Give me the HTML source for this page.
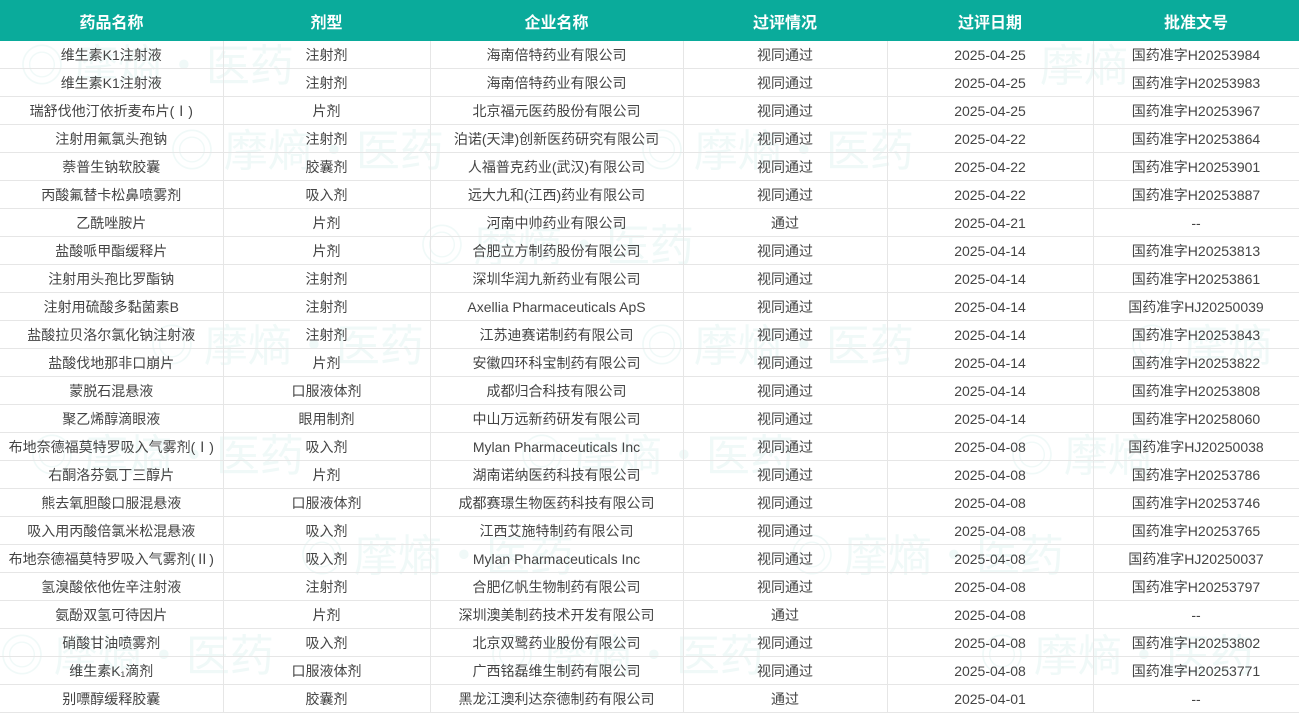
<!DOCTYPE html>
<html><head><meta charset="utf-8"><style>
body{margin:0;width:1299px;height:713px;overflow:hidden;background:#fff;font-family:"Liberation Sans","Noto Sans CJK SC",sans-serif;position:relative}
table{border-collapse:collapse;table-layout:fixed;width:1299px;position:relative;z-index:2}
th{background:#0aab9b;color:#fff;font-size:16px;font-weight:bold;height:41px;padding:0}
td{height:27px;border:1px solid #e6e6e6;border-top:none;color:#444;font-size:14px;text-align:center;padding:0;white-space:nowrap;overflow:hidden}
tr td:first-child{border-left:none}
.wm{position:absolute;z-index:1;color:#f0f9f8;font-size:44px;font-family:"Noto Sans CJK SC",sans-serif;white-space:nowrap}
</style></head><body>
<div class="wm" style="left:20px;top:30px">◎ 摩熵·医药</div>
<div class="wm" style="left:170px;top:115px">◎ 摩熵·医药</div>
<div class="wm" style="left:640px;top:115px">◎ 摩熵·医药</div>
<div class="wm" style="left:1040px;top:30px">摩熵</div>
<div class="wm" style="left:420px;top:210px">◎ 摩熵·医药</div>
<div class="wm" style="left:150px;top:310px">◎ 摩熵·医药</div>
<div class="wm" style="left:640px;top:310px">◎ 摩熵·医药</div>
<div class="wm" style="left:1130px;top:310px">◎ 摩熵</div>
<div class="wm" style="left:30px;top:420px">◎ 摩熵·医药</div>
<div class="wm" style="left:520px;top:420px">◎ 摩熵·医药</div>
<div class="wm" style="left:1010px;top:420px">◎ 摩熵</div>
<div class="wm" style="left:300px;top:520px">◎ 摩熵·医药</div>
<div class="wm" style="left:790px;top:520px">◎ 摩熵·医药</div>
<div class="wm" style="left:0px;top:620px">◎ 摩熵·医药</div>
<div class="wm" style="left:490px;top:620px">◎ 摩熵·医药</div>
<div class="wm" style="left:980px;top:620px">◎ 摩熵·医药</div>
<table>
<colgroup><col style="width:223px"><col style="width:207px"><col style="width:253px"><col style="width:204px"><col style="width:206px"><col style="width:206px"></colgroup>
<tr><th>药品名称</th><th>剂型</th><th>企业名称</th><th>过评情况</th><th>过评日期</th><th>批准文号</th></tr>
<tr><td>维生素K1注射液</td><td>注射剂</td><td>海南倍特药业有限公司</td><td>视同通过</td><td>2025-04-25</td><td>国药准字H20253984</td></tr>
<tr><td>维生素K1注射液</td><td>注射剂</td><td>海南倍特药业有限公司</td><td>视同通过</td><td>2025-04-25</td><td>国药准字H20253983</td></tr>
<tr><td>瑞舒伐他汀依折麦布片(Ⅰ)</td><td>片剂</td><td>北京福元医药股份有限公司</td><td>视同通过</td><td>2025-04-25</td><td>国药准字H20253967</td></tr>
<tr><td>注射用氟氯头孢钠</td><td>注射剂</td><td>泊诺(天津)创新医药研究有限公司</td><td>视同通过</td><td>2025-04-22</td><td>国药准字H20253864</td></tr>
<tr><td>萘普生钠软胶囊</td><td>胶囊剂</td><td>人福普克药业(武汉)有限公司</td><td>视同通过</td><td>2025-04-22</td><td>国药准字H20253901</td></tr>
<tr><td>丙酸氟替卡松鼻喷雾剂</td><td>吸入剂</td><td>远大九和(江西)药业有限公司</td><td>视同通过</td><td>2025-04-22</td><td>国药准字H20253887</td></tr>
<tr><td>乙酰唑胺片</td><td>片剂</td><td>河南中帅药业有限公司</td><td>通过</td><td>2025-04-21</td><td>--</td></tr>
<tr><td>盐酸哌甲酯缓释片</td><td>片剂</td><td>合肥立方制药股份有限公司</td><td>视同通过</td><td>2025-04-14</td><td>国药准字H20253813</td></tr>
<tr><td>注射用头孢比罗酯钠</td><td>注射剂</td><td>深圳华润九新药业有限公司</td><td>视同通过</td><td>2025-04-14</td><td>国药准字H20253861</td></tr>
<tr><td>注射用硫酸多黏菌素B</td><td>注射剂</td><td>Axellia Pharmaceuticals ApS</td><td>视同通过</td><td>2025-04-14</td><td>国药准字HJ20250039</td></tr>
<tr><td>盐酸拉贝洛尔氯化钠注射液</td><td>注射剂</td><td>江苏迪赛诺制药有限公司</td><td>视同通过</td><td>2025-04-14</td><td>国药准字H20253843</td></tr>
<tr><td>盐酸伐地那非口崩片</td><td>片剂</td><td>安徽四环科宝制药有限公司</td><td>视同通过</td><td>2025-04-14</td><td>国药准字H20253822</td></tr>
<tr><td>蒙脱石混悬液</td><td>口服液体剂</td><td>成都归合科技有限公司</td><td>视同通过</td><td>2025-04-14</td><td>国药准字H20253808</td></tr>
<tr><td>聚乙烯醇滴眼液</td><td>眼用制剂</td><td>中山万远新药研发有限公司</td><td>视同通过</td><td>2025-04-14</td><td>国药准字H20258060</td></tr>
<tr><td>布地奈德福莫特罗吸入气雾剂(Ⅰ)</td><td>吸入剂</td><td>Mylan Pharmaceuticals Inc</td><td>视同通过</td><td>2025-04-08</td><td>国药准字HJ20250038</td></tr>
<tr><td>右酮洛芬氨丁三醇片</td><td>片剂</td><td>湖南诺纳医药科技有限公司</td><td>视同通过</td><td>2025-04-08</td><td>国药准字H20253786</td></tr>
<tr><td>熊去氧胆酸口服混悬液</td><td>口服液体剂</td><td>成都赛璟生物医药科技有限公司</td><td>视同通过</td><td>2025-04-08</td><td>国药准字H20253746</td></tr>
<tr><td>吸入用丙酸倍氯米松混悬液</td><td>吸入剂</td><td>江西艾施特制药有限公司</td><td>视同通过</td><td>2025-04-08</td><td>国药准字H20253765</td></tr>
<tr><td>布地奈德福莫特罗吸入气雾剂(Ⅱ)</td><td>吸入剂</td><td>Mylan Pharmaceuticals Inc</td><td>视同通过</td><td>2025-04-08</td><td>国药准字HJ20250037</td></tr>
<tr><td>氢溴酸依他佐辛注射液</td><td>注射剂</td><td>合肥亿帆生物制药有限公司</td><td>视同通过</td><td>2025-04-08</td><td>国药准字H20253797</td></tr>
<tr><td>氨酚双氢可待因片</td><td>片剂</td><td>深圳澳美制药技术开发有限公司</td><td>通过</td><td>2025-04-08</td><td>--</td></tr>
<tr><td>硝酸甘油喷雾剂</td><td>吸入剂</td><td>北京双鹭药业股份有限公司</td><td>视同通过</td><td>2025-04-08</td><td>国药准字H20253802</td></tr>
<tr><td>维生素K₁滴剂</td><td>口服液体剂</td><td>广西铭磊维生制药有限公司</td><td>视同通过</td><td>2025-04-08</td><td>国药准字H20253771</td></tr>
<tr><td>别嘌醇缓释胶囊</td><td>胶囊剂</td><td>黑龙江澳利达奈德制药有限公司</td><td>通过</td><td>2025-04-01</td><td>--</td></tr>
</table>
</body></html>
